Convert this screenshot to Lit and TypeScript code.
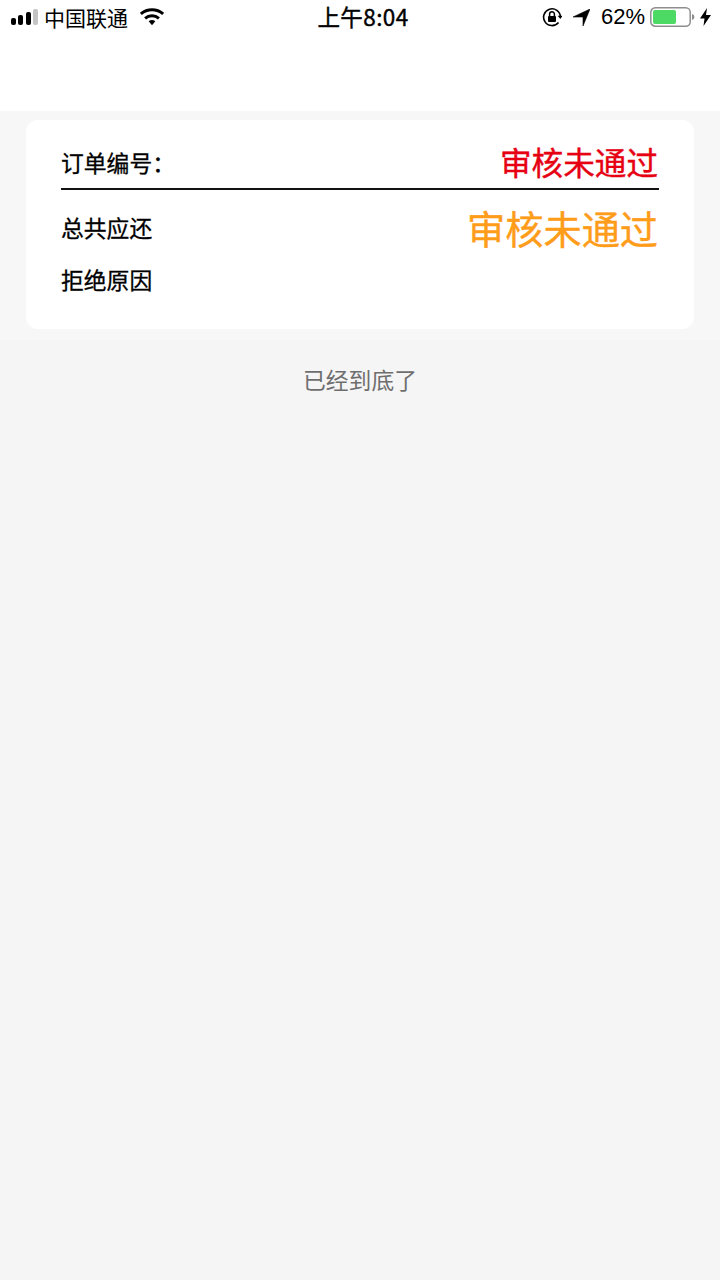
import { LitElement, html, css } from "lit";
import { customElement } from "lit/decorators.js";

@customElement("app-root")
export class AppRoot extends LitElement {
  static styles = css`
    :host {
      display: block;
      width: 720px;
      height: 1280px;
      background: #f5f5f5;
      font-family: "Noto Sans CJK SC", "Liberation Sans", sans-serif;
      color: #000;
      overflow: hidden;
    }
    .head { height: 111px; background: #fff; box-sizing: border-box; }
    .status {
      height: 34px;
      display: grid;
      grid-template-columns: 1fr auto 1fr;
      align-items: center;
      padding: 0 9px 0 11px;
    }
    .left, .right { display: flex; align-items: center; }
    .right { justify-content: flex-end; }
    .carrier { font-size: 21px; line-height: 33px; margin-left: 5px; margin-right: 12px; }
    .time { font-size: 22.5px; line-height: 31px; margin-bottom: 2px; margin-left: 4px; letter-spacing: 0.4px; -webkit-text-stroke: 0.4px #000; }
    .pct { font-size: 22px; line-height: 34px; font-family: "Liberation Sans", sans-serif; margin: 0 5px 0 11px; }
    svg { display: block; }
    .lock { margin-right: 11px; }
    .bolt { margin-left: 5px; }
    .zone {
      background: #f7f7f7;
      padding: 9px 26px 11px;
    }
    .card {
      background: #fff;
      border-radius: 12px;
      height: 209px;
      box-sizing: border-box;
      padding: 20px 35px 0;
    }
    .order {
      display: flex;
      justify-content: space-between;
      align-items: flex-start;
      border-bottom: 2px solid #111;
      box-sizing: border-box;
      height: 50px;
    }
    .label { font-size: 22.8px; line-height: 32px; -webkit-text-stroke: 0.3px #000; }
    .order .label { margin-top: 7px; }
    .red { color: #e60012; font-size: 31.6px; line-height: 46px; padding-right: 1px; margin-top: -2px; -webkit-text-stroke: 0.4px #e60012; }
    .row {
      display: flex;
      justify-content: space-between;
      align-items: flex-start;
      height: 74px;
    }
    .row .label { margin-top: 22px; }
    .orange { color: #ff9c1a; font-size: 38.2px; line-height: 50px; padding-right: 1px; margin-top: 13px; -webkit-text-stroke: 0.4px #ff9c1a; }
    .end {
      text-align: center;
      font-size: 22.8px;
      line-height: 32px;
      color: #6e6e6e;
      margin-top: 24px;
    }
  `;

  render() {
    return html`
      <div class="head">
        <div class="status">
          <div class="left">
            <svg width="28" height="18" viewBox="0 0 28 18">
              <rect x="0" y="10" width="5" height="7" rx="2" fill="#000"/>
              <rect x="7" y="7" width="5" height="10" rx="2" fill="#000"/>
              <rect x="15" y="4" width="5" height="13" rx="2" fill="#000"/>
              <rect x="22" y="1" width="5" height="16" rx="2" fill="#c4c4c4"/>
            </svg>
            <span class="carrier">中国联通</span>
            <svg width="24" height="18" viewBox="0 0 26 19">
              <path d="M13 18.5l-3.6-4.3a5.6 5.6 0 0 1 7.2 0z" fill="#000"/>
              <path d="M1 6.2a18.4 18.4 0 0 1 24 0" fill="none" stroke="#000" stroke-width="3.2"/>
              <path d="M5.5 11a11.6 11.6 0 0 1 15 0" fill="none" stroke="#000" stroke-width="3.2"/>
            </svg>
          </div>
          <div class="time">上午8:04</div>
          <div class="right">
            <svg class="lock" width="20" height="20" viewBox="0 0 20 20">
              <path d="M16.5 15.5A8.4 8.4 0 1 1 18.4 10" fill="none" stroke="#000" stroke-width="1.6"/>
              <path d="M15.6 8.8l2.8 3.2 2-3.2z" fill="#000"/>
              <rect x="6" y="9" width="8" height="6" rx="1" fill="#000"/>
              <path d="M7.6 9V7.2a2.4 2.4 0 0 1 4.8 0V9" fill="none" stroke="#000" stroke-width="1.5"/>
            </svg>
            <svg width="17" height="17" viewBox="0 0 17 17">
              <path d="M17 0L10 17V8H0z" fill="#000" stroke="#000" stroke-width="0.6"/>
            </svg>
            <span class="pct">62%</span>
            <svg width="45" height="20" viewBox="0 0 45 20">
              <rect x="0.8" y="0.8" width="39.4" height="18.4" rx="4.5" fill="none" stroke="#8e8e8e" stroke-width="1.5"/>
              <rect x="3" y="3" width="23" height="14" rx="2" fill="#4cd964"/>
              <path d="M42 7c1.6.4 2.4 1.6 2.4 3s-.8 2.6-2.4 3z" fill="#8e8e8e"/>
            </svg>
            <svg class="bolt" width="11" height="18" viewBox="0 0 11 18">
              <path d="M7 0L0 10.5h4.5L3.5 18 11 7H6z" fill="#000"/>
            </svg>
          </div>
        </div>
      </div>
      <div class="zone">
        <div class="card">
          <div class="order">
            <span class="label">订单编号：</span>
            <span class="red">审核未通过</span>
          </div>
          <div class="row">
            <span class="label">总共应还</span>
            <span class="orange">审核未通过</span>
          </div>
          <div class="label">拒绝原因</div>
        </div>
      </div>
      <div class="end">已经到底了</div>
    `;
  }
}
